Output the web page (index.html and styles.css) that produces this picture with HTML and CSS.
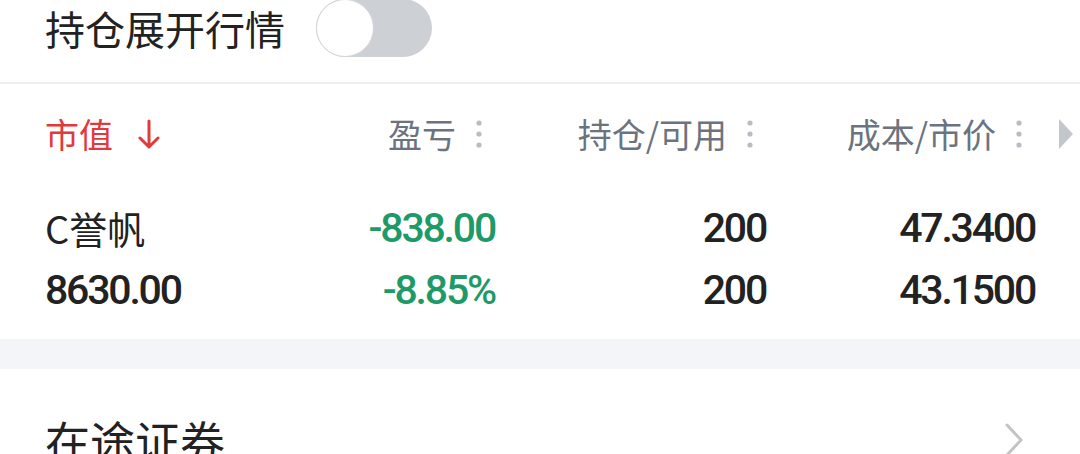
FILE: index.html
```html
<!DOCTYPE html>
<html lang="zh-CN">
<head>
    <meta charset="UTF-8">
    <title>持仓</title>
    <link rel="stylesheet" href="styles.css">
</head>
<body>

<div class="switch-row">
    <span class="switch-label">持仓展开行情</span>
    <div class="toggle"><div class="knob"></div></div>
</div>

<div class="grid head-row">
    <div class="head-cell sort-active">
        <span>市值</span>
        <svg class="sort-arrow" width="22" height="31" viewBox="0 0 22 31">
            <path d="M11 2 V28 M2 19 L11 28 L20 19" fill="none" stroke="#e2393b" stroke-width="3" stroke-linecap="round" stroke-linejoin="round"/>
        </svg>
    </div>
    <div class="head-cell right">
        <span>盈亏</span>
        <svg class="dots" width="6" height="28" viewBox="0 0 6 28"><circle cx="3" cy="3" r="2.6"/><circle cx="3" cy="14" r="2.6"/><circle cx="3" cy="25" r="2.6"/></svg>
    </div>
    <div class="head-cell right">
        <span>持仓/可用</span>
        <svg class="dots" width="6" height="28" viewBox="0 0 6 28"><circle cx="3" cy="3" r="2.6"/><circle cx="3" cy="14" r="2.6"/><circle cx="3" cy="25" r="2.6"/></svg>
    </div>
    <div class="head-cell right">
        <span>成本/市价</span>
        <svg class="dots" width="6" height="28" viewBox="0 0 6 28"><circle cx="3" cy="3" r="2.6"/><circle cx="3" cy="14" r="2.6"/><circle cx="3" cy="25" r="2.6"/></svg>
    </div>
    <div class="more">
        <svg width="14" height="30" viewBox="0 0 14 30"><polygon points="0,0 14,15 0,30" fill="#c3c7cc"/></svg>
    </div>
</div>

<div class="grid data-row">
    <div class="cell name">C誉帆</div>
    <div class="cell num down">-838.00</div>
    <div class="cell num">200</div>
    <div class="cell num">47.3400</div>

    <div class="cell num left">8630.00</div>
    <div class="cell num down">-8.85%</div>
    <div class="cell num">200</div>
    <div class="cell num">43.1500</div>
</div>

<div class="band"></div>

<div class="link-row">
    <span class="link-label">在途证券</span>
    <svg class="chevron" width="20" height="36" viewBox="0 0 20 36">
        <path d="M3 3 L17 18 L3 33" fill="none" stroke="#c4c4c4" stroke-width="3" stroke-linecap="round" stroke-linejoin="round"/>
    </svg>
</div>

</body>
</html>
```

FILE: styles.css
```css
/* position list panel */
html {
  overflow: hidden;
}

body {
  margin: 0;
  background: #ffffff;
  color: #222222;
  font-family: "Noto Sans CJK SC", "Noto Sans", sans-serif;
}

.switch-row {
  display: flex;
  align-items: center;
  gap: 31px;
  height: 58px;
  margin-top: -1px;
  padding: 0 0 25px 45px;
  border-bottom: 2px solid #eeeeee;
}

.switch-label {
  font-size: 40px;
  line-height: 1;
}

.toggle {
  width: 116px;
  height: 58px;
  border-radius: 29px;
  background: #cdd0d5;
  display: flex;
  align-items: center;
}

.knob {
  width: 56px;
  height: 56px;
  border-radius: 50%;
  background: #ffffff;
  border: 1px solid #d3d5d9;
}

/* table grid shared by header and rows */
.grid {
  display: grid;
  grid-template-columns: 200px 250px 271px 269px 1fr;
  padding-left: 45px;
}

.head-row {
  height: 100px;
  align-items: center;
}

.head-cell {
  display: flex;
  align-items: center;
  font-size: 34px;
  line-height: 1;
  color: #6b747e;
}

.head-cell.right {
  justify-content: flex-end;
  gap: 20px;
  padding-right: 13px;
}

.sort-active {
  color: #e2393b;
  gap: 25px;
}

.dots {
  fill: #b8bcc3;
}

.more {
  display: flex;
  padding-left: 24px;
}

.data-row {
  grid-template-columns: 200px 250px 271px 269px;
  padding-top: 13px;
  padding-bottom: 18px;
}

.cell {
  height: 62px;
  line-height: 62px;
  text-align: right;
  white-space: nowrap;
}

.cell.name {
  text-align: left;
  font-size: 38px;
}

.cell.num {
  font-family: Roboto, "Liberation Sans", sans-serif;
  font-weight: 500;
  font-size: 41px;
  letter-spacing: -2.2px;
}

.cell.left {
  text-align: left;
}

.cell.down {
  color: #1e9a69;
}

.band {
  height: 30px;
  background: #f4f5f8;
}

.link-row {
  display: flex;
  align-items: center;
  justify-content: space-between;
  height: 142px;
  padding: 0 56px 0 45px;
}

.link-label {
  font-size: 45px;
  line-height: 1;
}
```
